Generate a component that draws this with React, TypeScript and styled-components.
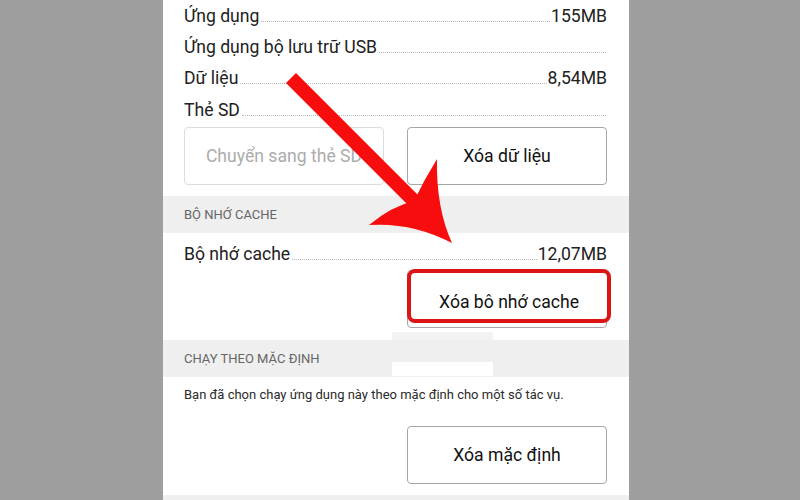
import React from 'react';
import styled, { createGlobalStyle } from 'styled-components';

const GlobalStyle = createGlobalStyle`
  html, body {
    margin: 0;
    padding: 0;
    background: #9e9e9e;
    font-family: Roboto, "Noto Sans", sans-serif;
  }
`;

const Page = styled.div`
  position: relative;
  width: 800px;
  height: 500px;
  overflow: hidden;
  background: #9e9e9e;
`;

const Panel = styled.div`
  margin-left: 163px;
  width: 466px;
  height: 500px;
  overflow: hidden;
  background: #ffffff;
`;

const Section = styled.div<{ $top: number; $bottom: number }>`
  padding: ${(p) => p.$top}px 22px ${(p) => p.$bottom}px 21px;
  display: flex;
  flex-direction: column;
`;

const InfoRow = styled.div`
  height: 31.4px;
  flex-shrink: 0;
  display: flex;
  align-items: baseline;
  font-size: 17.6px;
  line-height: 31.4px;
  color: #212121;
  white-space: nowrap;
`;

const Leader = styled.span`
  flex: 1;
  margin: 0 1px 0 2px;
  border-bottom: 1px dotted #b8b8b8;
`;

const ButtonRow = styled.div<{ $top: number }>`
  margin-top: ${(p) => p.$top}px;
  display: flex;
  justify-content: flex-end;
  gap: 23px;
`;

const Button = styled.div<{ $disabled?: boolean }>`
  position: relative;
  box-sizing: border-box;
  width: 200px;
  height: 58px;
  flex-shrink: 0;
  border: 1px solid ${(p) => (p.$disabled ? '#dcdcdc' : '#a6a6a6')};
  border-radius: 4px;
  display: flex;
  align-items: center;
  justify-content: center;
  font-size: 17.6px;
  color: ${(p) => (p.$disabled ? '#acacac' : '#111111')};
  white-space: nowrap;
  background: #ffffff;
`;

// red marker box drawn over the cache button
const Highlight = styled.div`
  position: absolute;
  top: -2px;
  left: -1px;
  width: 204px;
  height: 54px;
  box-sizing: border-box;
  border: 4px solid #dc1414;
  border-radius: 8px;
  background: #ffffff;
  display: flex;
  align-items: center;
  justify-content: center;
  padding-top: 11px;
  font-size: 17.6px;
  color: #111111;
`;

const Band = styled.div`
  height: 37px;
  background: #efefef;
  padding-left: 21px;
  display: flex;
  align-items: center;
  font-size: 13px;
  color: #666666;
  text-transform: uppercase;
`;

const Note = styled.p`
  margin: 8px 0 0;
  font-size: 13px;
  line-height: 20px;
  color: #2a2a2a;
  white-space: nowrap;
`;

const Patch = styled.div<{ $top: number; $height: number; $color: string }>`
  position: absolute;
  left: 392px;
  top: ${(p) => p.$top}px;
  width: 101px;
  height: ${(p) => p.$height}px;
  background: ${(p) => p.$color};
`;

const Overlay = styled.svg`
  position: absolute;
  top: 0;
  left: 0;
  pointer-events: none;
`;

const rows: [string, string][] = [
  ['Ứng dụng', '155MB'],
  ['Ứng dụng bộ lưu trữ USB', ''],
  ['Dữ liệu', '8,54MB'],
  ['Thẻ SD', ''],
];

const App: React.FC = () => {
  return (
    <Page>
      <GlobalStyle />
      <Panel>
        <Section $top={0.5} $bottom={11}>
          {rows.map(([label, value]) => (
            <InfoRow key={label}>
              {label}
              <Leader />
              {value}
            </InfoRow>
          ))}
          <ButtonRow $top={1}>
            <Button $disabled>Chuyển sang thẻ SD</Button>
            <Button>Xóa dữ liệu</Button>
          </ButtonRow>
        </Section>
        <Band>Bộ nhớ cache</Band>
        <Section $top={6} $bottom={11.5}>
          <InfoRow>
            Bộ nhớ cache
            <Leader />
            12,07MB
          </InfoRow>
          <ButtonRow $top={0}>
            <Button>
              <Highlight>Xóa bô nhớ cache</Highlight>
            </Button>
          </ButtonRow>
        </Section>
        <Band>Chạy theo mặc định</Band>
        <Section $top={0} $bottom={11}>
          <Note>Bạn đã chọn chạy ứng dụng này theo mặc định cho một số tác vụ.</Note>
          <ButtonRow $top={21}>
            <Button>Xóa mặc định</Button>
          </ButtonRow>
        </Section>
        <Band />
      </Panel>
      <Patch $top={332} $height={8} $color="#f3f3f3" />
      <Patch $top={362} $height={14} $color="#ffffff" />
      <Overlay width="800" height="500" viewBox="0 0 800 500">
        <polygon points="286,83 296,73 422,199 412,209" fill="#f70d0d" />
        <path
          d="M437 159 Q436 208 452 243 Q412 222 369 225 Q392 206 414 201 Q424 180 437 159 Z"
          fill="#f70d0d"
        />
      </Overlay>
    </Page>
  );
};

export default App;
